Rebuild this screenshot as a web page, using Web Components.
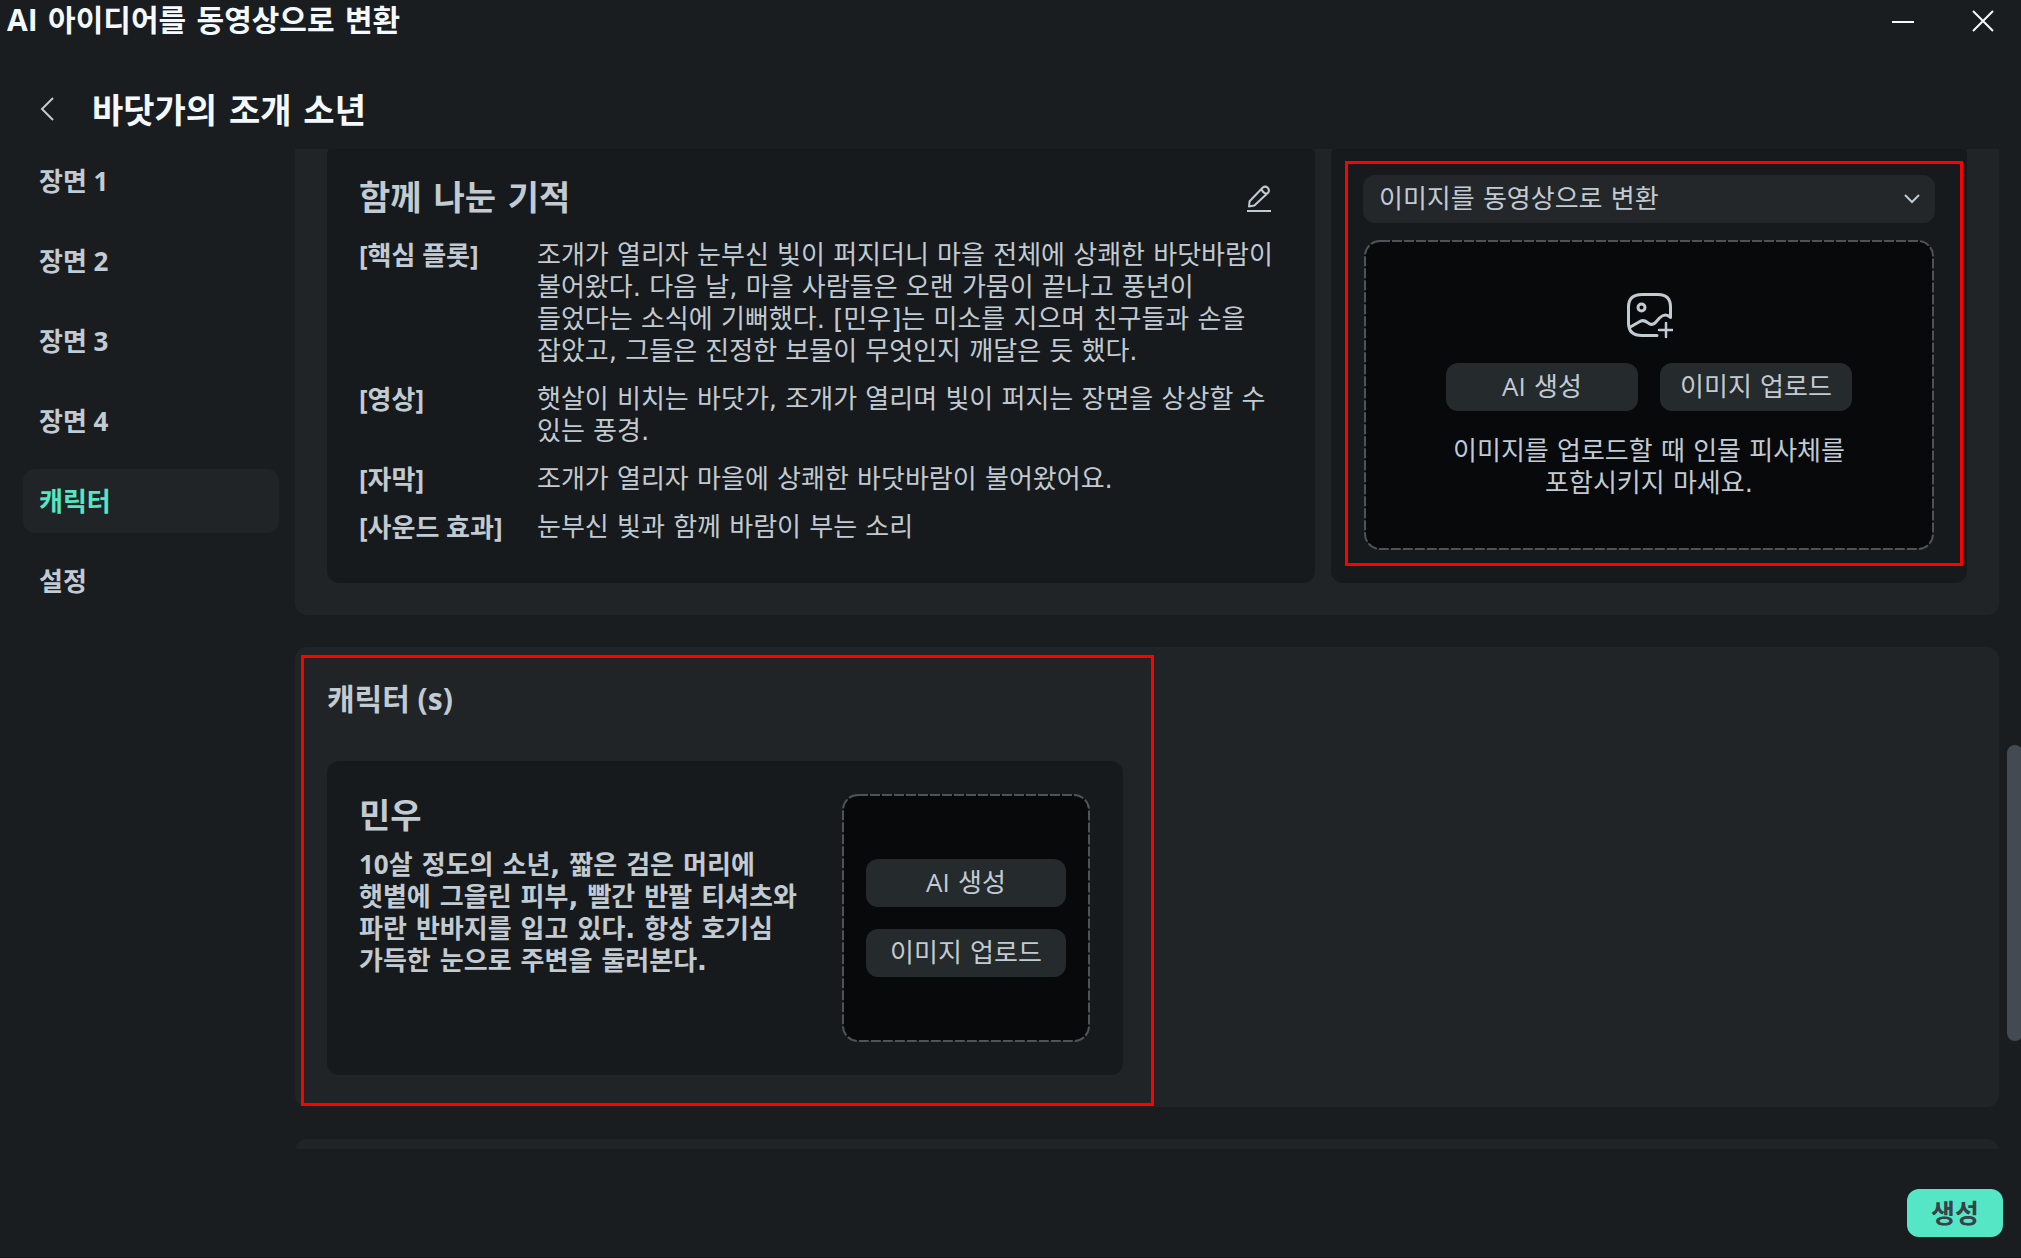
<!DOCTYPE html>
<html lang="ko">
<head>
<meta charset="utf-8">
<meta name="viewport" content="width=device-width, initial-scale=1">
<title>AI 아이디어를 동영상으로 변환</title>
<style>
  :root {
    --bg: #191d20; --panel: #202427; --card: #161a1d; --well: #07090b;
    --control: #252a2d; --text: #c2cad2; --bright: #f3f9ff; --accent: #55e7c5;
    --latin: "Open Sans", "Noto Sans CJK KR", sans-serif;
    --hangul: "DejaVu Sans", "Noto Sans CJK KR", sans-serif;
  }
  html, body { height: 100%; margin: 0; }
  body { background: var(--bg); color: var(--text); font: 26px/32px var(--hangul); overflow: hidden; }
  .latin { font-family: var(--latin); line-height: 1; }
</style>
</head>
<body>
<app-window>
  <title-bar slot="title"><span class="latin">AI</span> 아이디어를 동영상으로 변환</title-bar>
  <project-header slot="header">바닷가의 조개 소년</project-header>
  <scene-nav slot="nav">
    <nav-item>장면 1</nav-item>
    <nav-item>장면 2</nav-item>
    <nav-item>장면 3</nav-item>
    <nav-item>장면 4</nav-item>
    <nav-item active>캐릭터</nav-item>
    <nav-item>설정</nav-item>
  </scene-nav>
  <content-panel class="scene">
    <plot-card>
      <span slot="title">함께 나눈 기적</span>
      <plot-row label="[핵심 플롯]">조개가 열리자 눈부신 빛이 퍼지더니 마을 전체에 상쾌한 바닷바람이 불어왔다. 다음 날, 마을 사람들은 오랜 가뭄이 끝나고 풍년이 들었다는 소식에 기뻐했다. [민우]는 미소를 지으며 친구들과 손을 잡았고, 그들은 진정한 보물이 무엇인지 깨달은 듯 했다.</plot-row>
      <plot-row label="[영상]">햇살이 비치는 바닷가, 조개가 열리며 빛이 퍼지는 장면을 상상할 수 있는 풍경.</plot-row>
      <plot-row label="[자막]">조개가 열리자 마을에 상쾌한 바닷바람이 불어왔어요.</plot-row>
      <plot-row label="[사운드 효과]">눈부신 빛과 함께 바람이 부는 소리</plot-row>
    </plot-card>
    <media-card>이미지를 업로드할 때 인물 피사체를 포함시키지 마세요.</media-card>
  </content-panel>
  <content-panel heading="캐릭터 (s)">
    <character-card name="민우"><span class="latin">10</span>살 정도의 소년, 짧은 검은 머리에 햇볕에 그을린 피부, 빨간 반팔 티셔츠와 파란 반바지를 입고 있다. 항상 호기심 가득한 눈으로 주변을 둘러본다.</character-card>
  </content-panel>
  <content-panel></content-panel>
  <action-button slot="footer" primary>생성</action-button>
</app-window>

<script>
const define = (name, render) => customElements.define(name, class extends HTMLElement {
  constructor() { super(); this.attachShadow({ mode: "open" }); }
  connectedCallback() {
    if (this.shadowRoot.childNodes.length) return;
    const t = document.createElement("template");
    t.innerHTML = `<style>*{box-sizing:border-box}:host{box-sizing:border-box}h1,h2,h3,p{margin:0}button,select{font:inherit;color:inherit;border:0;margin:0;padding:0;background:none}svg{display:block;fill:none;stroke:currentColor}.latin{font-family:var(--latin);line-height:1}</style>` + render(this);
    this.shadowRoot.append(t.content.cloneNode(true));
  }
});

define("app-window", () => `
<style>
  :host { display: flex; flex-direction: column; height: 100vh; border-bottom: 1px solid #101316; }
  .body { flex: 1; min-height: 0; display: flex; }
  .view { flex: 1; min-width: 0; overflow: hidden; display: flex; flex-direction: column; gap: 32px; }
  .view ::slotted(.scene) { margin-top: -38px; }
  footer { display: flex; justify-content: flex-end; padding: 40px 18px 20px; }
</style>
<slot name="title"></slot>
<slot name="header"></slot>
<div class="body">
  <slot name="nav"></slot>
  <main class="view"><slot></slot></main>
  <scroll-track></scroll-track>
</div>
<footer><slot name="footer"></slot></footer>`);

define("title-bar", () => `
<style>
  :host { display: flex; align-items: center; height: 42px; padding-left: 7px; color: var(--bright); }
  h1 { flex: 1; font: 700 30px/40px var(--hangul); }
  .tools { display: flex; gap: 4px; }
  button { width: 76px; height: 42px; display: grid; place-items: center; }
</style>
<h1><slot></slot></h1>
<div class="tools">
  <button aria-label="최소화"><svg width="22" height="22" stroke-width="2"><path d="M0 12H22"/></svg></button>
  <button aria-label="닫기"><svg width="22" height="22" stroke-width="2"><path d="M1 1L21 21M21 1L1 21"/></svg></button>
</div>`);

define("project-header", () => `
<style>
  :host { display: flex; align-items: center; height: 107px; padding: 27px 0 0 23px; color: var(--bright); }
  button { width: 48px; height: 48px; display: grid; place-items: center; color: var(--text); }
  h2 { padding: 4px 0 0 21px; font: 700 34px/48px var(--hangul); }
</style>
<button aria-label="뒤로"><svg width="14" height="24" stroke-width="2"><path d="M13 1L2 12L13 23"/></svg></button>
<h2><slot></slot></h2>`);

define("scene-nav", () => `
<style>:host { display: flex; flex-direction: column; gap: 16px; width: 295px; flex: none; padding: 0 16px 0 23px; }</style>
<slot></slot>`);

define("nav-item", () => `
<style>
  :host { display: block; }
  a { display: flex; align-items: center; height: 64px; padding: 0 16px; border-radius: 12px; color: inherit; text-decoration: none; font: 700 26px/32px var(--latin); }
  :host([active]) a { background: var(--panel); color: var(--accent); }
</style>
<a href="#"><slot></slot></a>`);

define("content-panel", el => `
<style>
  :host { display: block; flex: none; padding: 32px; background: var(--panel); border-radius: 12px; }
  h2 { font: 700 30px/40px var(--latin); margin-bottom: 42px; }
  .grid { display: grid; grid-template-columns: 1fr 1fr; gap: 48px; }
  :host(.scene) .grid { grid-template-columns: 988fr 636fr; gap: 16px; }
</style>
${el.hasAttribute("heading") ? `<h2>${el.getAttribute("heading")}</h2>` : ""}
<div class="grid"><slot></slot></div>`);

define("plot-card", () => `
<style>
  :host { display: flex; flex-direction: column; gap: 16px; padding: 32px 32px 40px; background: var(--card); border-radius: 12px; }
  header { display: flex; align-items: flex-start; justify-content: space-between; }
  h3 { font: 700 34px/46px var(--hangul); }
  button { width: 48px; height: 48px; display: grid; place-items: center; }
</style>
<header>
  <h3><slot name="title"></slot></h3>
  <button aria-label="편집"><svg width="24" height="28" stroke-width="2" stroke-linejoin="round"><path d="M2 21.5L2.6 16.2L15.8 2.5Q18.4 0.6 20.7 2.8Q23 5.2 21 7.8L7.4 20.4ZM14.6 3.8Q15.4 8 19.8 8.8"/><path d="M0 26H24"/></svg></button>
</header>
<slot></slot>`);

define("plot-row", el => `
<style>
  :host { display: flex; }
  b { flex: 0 0 178px; font: 700 26px/32px var(--latin); }
  p { flex: 1; word-break: keep-all; }
</style>
<b>${el.getAttribute("label")}</b><p><slot></slot></p>`);

define("action-button", () => `
<style>
  :host { display: block; }
  button { width: 100%; height: 48px; border-radius: 12px; background: var(--control); font: 26px/32px var(--hangul); white-space: nowrap; }
  :host([primary]) { width: 96px; }
  :host([primary]) button { background: var(--accent); color: #38414a; font: 700 26px/32px var(--latin); }
</style>
<button><slot></slot></button>`);

define("drop-zone", () => `
<style>
  :host { display: flex; flex-direction: column; align-items: center; justify-content: center; position: relative; }
  svg { position: absolute; inset: 0; width: 100%; height: 100%; }
  rect { x: 2px; y: 2px; width: calc(100% - 4px); height: calc(100% - 4px); fill: var(--well); stroke: #505355; stroke-width: 2px; stroke-dasharray: 10 2; }
  ::slotted(*) { position: relative; }
</style>
<svg aria-hidden="true"><rect rx="15"/></svg>
<slot></slot>`);

define("mark-frame", () => `<style>:host { position: absolute; border: 3px solid #f00; pointer-events: none; }</style>`);

define("media-card", () => `
<style>
  :host { display: flex; flex-direction: column; gap: 16px; position: relative; padding: 32px; background: var(--card); border-radius: 12px; }
  label { display: grid; align-items: center; }
  label > * { grid-area: 1 / 1; }
  select { appearance: none; height: 48px; padding: 0 48px 0 16px; border-radius: 12px; background: #23272a; }
  label svg { justify-self: end; margin-right: 15px; pointer-events: none; }
  drop-zone { flex: 1; gap: 24px; }
  .row { display: flex; gap: 22px; }
  .row action-button { width: 192px; }
  p { max-width: 440px; text-align: center; word-break: keep-all; }
  mark-frame { inset: 18px 4px 17px 14px; }
</style>
<label>
  <select aria-label="변환 방식"><option>이미지를 동영상으로 변환</option></select>
  <svg width="16" height="10" stroke-width="2"><path d="M1 1L8 8L15 1"/></svg>
</label>
<drop-zone>
  <svg width="48" height="48" stroke-width="3" stroke-linecap="round" stroke-linejoin="round">
    <path d="M32 44.5H17Q3.5 44.5 3.5 32V16Q3.5 3.5 17 3.5H33Q45.5 3.5 45.5 16V26.5C41.5 22.5 38 23.5 34.5 27L30 32Q27 34.5 24 32.5L22.5 31.5Q18 28 14 31L4.5 36.5"/>
    <circle cx="16.5" cy="16.5" r="3.5"/>
    <path stroke-width="2.5" d="M41 32V46M34 39H48"/>
  </svg>
  <div class="row"><action-button><span class="latin">AI</span> 생성</action-button><action-button>이미지 업로드</action-button></div>
  <p><slot></slot></p>
</drop-zone>
<mark-frame></mark-frame>`);

define("character-card", el => `
<style>
  :host { display: flex; gap: 40px; position: relative; padding: 32px; background: var(--card); border-radius: 12px; }
  .info { flex: 1; }
  h3 { font: 700 34px/46px var(--hangul); margin-bottom: 10px; }
  p { font-weight: 700; word-break: keep-all; }
  drop-zone { flex: 0 0 250px; height: 250px; gap: 22px; }
  action-button { width: 200px; }
  mark-frame { inset: -106px -31px -31px -26px; }
</style>
<div class="info"><h3>${el.getAttribute("name")}</h3><p><slot></slot></p></div>
<drop-zone><action-button><span class="latin">AI</span> 생성</action-button><action-button>이미지 업로드</action-button></drop-zone>
<mark-frame></mark-frame>`);

define("scroll-track", () => `
<style>
  :host { display: flex; flex-direction: column; flex: none; width: 14px; margin-left: 8px; overflow: hidden; }
  .before { flex: 596; } .after { flex: 108; }
  .thumb { flex: 296; width: 16px; border-radius: 8px; background: #434a51; }
</style>
<div class="before"></div><div class="thumb"></div><div class="after"></div>`);
</script>
</body>
</html>
